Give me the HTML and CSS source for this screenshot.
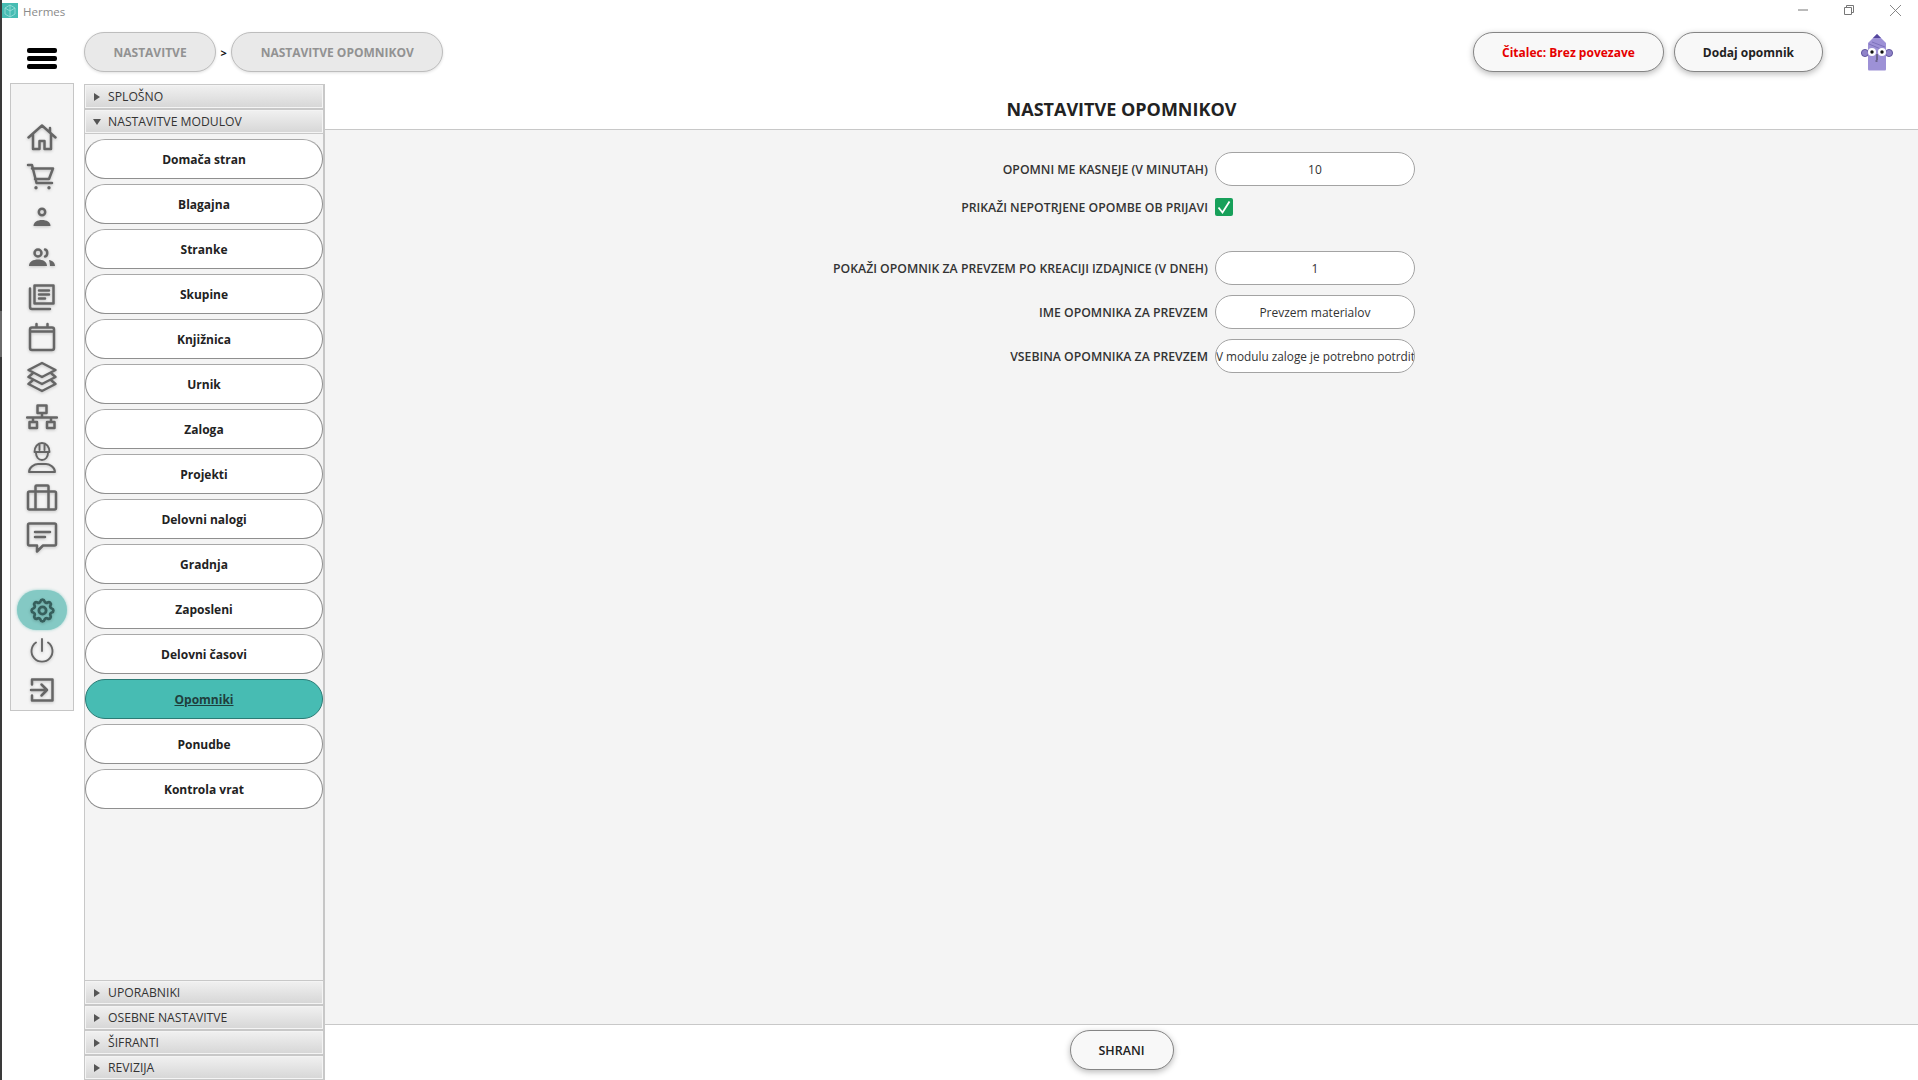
FILE: index.html
```html
<!DOCTYPE html>
<html lang="sl">
<head>
<meta charset="utf-8">
<title>Hermes</title>
<link rel="stylesheet" href="styles.css">
</head>
<body>
<div class="window">
  <div class="edge"></div>
  <div class="app">
    <header class="titlebar">
      <span class="app-icon"><svg viewBox="0 0 16 16" width="16" height="16"><path d="M8 2l5 3v6l-5 3-5-3V5zM8 2v12M3 5l5 3 5-3" fill="none" stroke="#9fe0da" stroke-width=".8"/></svg></span>
      <span class="app-name">Hermes</span>
      <div class="win-controls">
        <span class="win-btn"><svg viewBox="0 0 10 10" width="10" height="10"><path d="M0 5h10" stroke="#777" fill="none"/></svg></span>
        <span class="win-btn"><svg viewBox="0 0 10 10" width="10" height="10"><path d="M.5 2.5h7v7h-7zM2.5 2.5v-2h7v7h-2" stroke="#777" fill="none"/></svg></span>
        <span class="win-btn"><svg viewBox="0 0 10 10" width="11" height="11"><path d="M0 0l10 10M10 0L0 10" stroke="#777" fill="none" stroke-width=".8"/></svg></span>
      </div>
    </header>

    <div class="topbar">
      <div class="hamburger"><i></i><i></i><i></i></div>
      <nav class="crumbs">
        <span class="crumb">NASTAVITVE</span>
        <span class="crumb-sep">&gt;</span>
        <span class="crumb">NASTAVITVE OPOMNIKOV</span>
      </nav>
      <div class="top-actions">
        <button class="pill-btn pill-red">Čitalec: Brez povezave</button>
        <button class="pill-btn">Dodaj opomnik</button>
        <span class="avatar">
          <svg viewBox="0 0 32 39" width="32" height="39">
            <circle cx="4" cy="20" r="3.6" fill="#8f83c8" stroke="#4e4290" stroke-width=".8"/>
            <circle cx="28" cy="20" r="3.6" fill="#8f83c8" stroke="#4e4290" stroke-width=".8"/>
            <path d="M7 10 16 1l9 9v26q0 1.500-1 1.500H8q-1 0-1-1.500z" fill="#9d91d6"/>
            <path d="M12 5l4-4 4 4z" fill="#54479c"/>
            <path d="M8 11l14 6M11 9l13 5" stroke="#7468b4" stroke-width=".8" fill="none"/>
            <circle cx="11" cy="19" r="4" fill="#fff"/><circle cx="21" cy="19" r="4" fill="#fff"/>
            <circle cx="11" cy="19" r="1.700" fill="#111"/><circle cx="21" cy="19" r="1.700" fill="#111"/>
            <path d="M16 21v6M14.500 28h2" stroke="#222" stroke-width=".8" fill="none"/>
          </svg>
        </span>
      </div>
    </div>

    <div class="workspace">
      <aside class="rail">
        <span class="rail-item"><svg class="ico" viewBox="0 0 32 32"><path d="M2.500 16.500 16 4.500l13.500 12M7 13v15h6.500v-8h5v8H25V13M24 7v4"/></svg></span>
        <span class="rail-item"><svg class="ico" viewBox="0 0 32 32"><path d="M2 4h4l4.500 18H26M6 7.500h21l-4 10.500H9"/><circle class="solid" cx="10" cy="26.700" r="1.700"/><circle class="solid" cx="23" cy="26.700" r="1.700"/></svg></span>
        <span class="rail-item"><svg class="ico" viewBox="0 0 32 32"><circle cx="16" cy="11" r="3.200"/><path class="solid" d="M7.500 25c0-4 4-6 8.500-6s8.500 2 8.500 6z"/></svg></span>
        <span class="rail-item"><svg class="ico" viewBox="0 0 32 32"><circle cx="12" cy="12" r="3.500"/><path d="M19 8.500c3 .5 3 6.500 0 7"/><path class="solid" d="M3 25c0-4.500 4.500-6.500 9-6.500s9 2 9 6.500zM23 19c3.500.5 6 2.500 6 6h-5c0-2-.5-4-1-6z"/></svg></span>
        <span class="rail-item"><svg class="ico" viewBox="0 0 32 32"><path d="M8.500 4.500h19v18h-19zM4 7.500V26q0 2 2 2h18M13 9.500h10M13 13.500h10M13 17.500h6"/></svg></span>
        <span class="rail-item"><svg class="ico" viewBox="0 0 32 32"><path d="M6 6.500h20q2 0 2 2V27q0 2-2 2H6q-2 0-2-2V8.500q0-2 2-2zM4 10.500h24M10.500 3v3.500M21.500 3v3.500"/></svg></span>
        <span class="rail-item"><svg class="ico" viewBox="0 0 32 32"><path d="M16 2 29.500 9 16 16 2.500 9zM6.500 12.500 2.500 16 16 23l13.500-7-4-3.500M6.500 19.500 2.500 23 16 30l13.500-7-4-3.500"/></svg></span>
        <span class="rail-item"><svg class="ico" viewBox="0 0 32 32"><path d="M11.500 4.500h9v7.500h-9zM16 12v4M1 16.500h30M7 16.500V21M25 16.500V21M3.500 21h7.500v6H3.500zM21 21h7.500v6H21z"/></svg></span>
        <span class="rail-item"><svg class="ico ico-thin" viewBox="0 0 32 32"><path d="M8.500 11c0-5 3-9 7.500-9s7.500 4 7.500 9zM13.500 3v6M18.500 3v6M10 12c0 4 2.500 7 6 7s6-3 6-7M3 31c0-5 6-8 9-8h8c3 0 9 3 9 8z"/></svg></span>
        <span class="rail-item"><svg class="ico" viewBox="0 0 32 32"><path d="M3.500 10.500h25q1.500 0 1.500 1.500v15q0 1.500-1.500 1.500h-25Q2 28.500 2 27V12q0-1.500 1.500-1.500zM9.500 28.500V5.500q0-1 1-1h11q1 0 1 1v23"/></svg></span>
        <span class="rail-item"><svg class="ico" viewBox="0 0 32 32"><path d="M3.500 2.500h25q1.500 0 1.500 1.500v19q0 1.500-1.500 1.500H17l-6 6v-6H3.500Q2 24.500 2 23V4q0-1.500 1.500-1.500zM9 11h15M9 16h10"/></svg></span>
        <span class="rail-spacer"></span>
        <span class="rail-item rail-item-on"><svg class="ico ico-gear" viewBox="0 0 24 24"><path d="M10.325 4.317c.426-1.756 2.924-1.756 3.350 0a1.724 1.724 0 0 0 2.573 1.066c1.543-.94 3.310.826 2.370 2.370a1.724 1.724 0 0 0 1.065 2.572c1.756.426 1.756 2.924 0 3.350a1.724 1.724 0 0 0-1.066 2.573c.94 1.543-.826 3.310-2.370 2.370a1.724 1.724 0 0 0-2.572 1.065c-.426 1.756-2.924 1.756-3.350 0a1.724 1.724 0 0 0-2.573-1.066c-1.543.94-3.310-.826-2.370-2.370a1.724 1.724 0 0 0-1.065-2.572c-1.756-.426-1.756-2.924 0-3.350a1.724 1.724 0 0 0 1.066-2.573c-.94-1.543.826-3.310 2.370-2.370c1 .608 2.296.07 2.572-1.065z"/><circle cx="12" cy="12" r="3"/></svg></span>
        <span class="rail-item"><svg class="ico ico-thin" viewBox="0 0 32 32"><path d="M16 5v12M10 8.500a10.500 10.500 0 1 0 12 0"/></svg></span>
        <span class="rail-item"><svg class="ico" viewBox="0 0 32 32"><path d="M6 10.500V5.500h20.500v21H6v-5M5 16h16M15.500 10.500 21 16l-5.500 5.500"/></svg></span>
      </aside>

      <section class="accordion">
        <div class="acc-head"><span class="tri"></span>SPLOŠNO</div>
        <div class="acc-head"><span class="tri tri-open"></span>NASTAVITVE MODULOV</div>
        <div class="acc-panel">
          <button class="mod-btn">Domača stran</button>
          <button class="mod-btn">Blagajna</button>
          <button class="mod-btn">Stranke</button>
          <button class="mod-btn">Skupine</button>
          <button class="mod-btn">Knjižnica</button>
          <button class="mod-btn">Urnik</button>
          <button class="mod-btn">Zaloga</button>
          <button class="mod-btn">Projekti</button>
          <button class="mod-btn">Delovni nalogi</button>
          <button class="mod-btn">Gradnja</button>
          <button class="mod-btn">Zaposleni</button>
          <button class="mod-btn">Delovni časovi</button>
          <button class="mod-btn mod-btn-on">Opomniki</button>
          <button class="mod-btn">Ponudbe</button>
          <button class="mod-btn">Kontrola vrat</button>
        </div>
        <div class="acc-head"><span class="tri"></span>UPORABNIKI</div>
        <div class="acc-head"><span class="tri"></span>OSEBNE NASTAVITVE</div>
        <div class="acc-head"><span class="tri"></span>ŠIFRANTI</div>
        <div class="acc-head"><span class="tri"></span>REVIZIJA</div>
      </section>

      <main class="main">
        <h1 class="main-title">NASTAVITVE OPOMNIKOV</h1>
        <div class="main-body">
          <form class="form">
            <label class="form-label">OPOMNI ME KASNEJE (V MINUTAH)</label>
            <input class="field" value="10">
            <label class="form-label">PRIKAŽI NEPOTRJENE OPOMBE OB PRIJAVI</label>
            <span class="check-wrap"><span class="check"><svg viewBox="0 0 18 18" width="18" height="18"><path d="M3.500 9.500 7.500 14.500 14.500 3.500" fill="none" stroke="#fff" stroke-width="1.800"/></svg></span></span>
            <span class="form-spacer"></span>
            <label class="form-label">POKAŽI OPOMNIK ZA PREVZEM PO KREACIJI IZDAJNICE (V DNEH)</label>
            <input class="field" value="1">
            <label class="form-label">IME OPOMNIKA ZA PREVZEM</label>
            <input class="field" value="Prevzem materialov">
            <label class="form-label">VSEBINA OPOMNIKA ZA PREVZEM</label>
            <input class="field field-left" value="V modulu zaloge je potrebno potrditi prevzem materialov">
          </form>
        </div>
        <footer class="main-foot">
          <button class="pill-btn pill-save">SHRANI</button>
        </footer>
      </main>
    </div>
  </div>
</div>
</body>
</html>
```

FILE: styles.css
```css
* { box-sizing: border-box; }
html, body { margin: 0; height: 100%; background: #fff; overflow: hidden; }
body { font-family: "Open Sans", "Liberation Sans", sans-serif; color: #222; }
button, input { font-family: inherit; }

.window { display: flex; width: 1918px; height: 1080px; }
.edge {
  width: 2px;
  flex: none;
  background: linear-gradient(#3a3a3a 0 311px, #6a6a6a 311px 357px, #3a3a3a 357px);
}
.app { flex: 1; min-width: 0; display: flex; flex-direction: column; }

.titlebar { height: 25px; flex: none; display: flex; align-items: flex-start; padding-top: 3px; }
.app-icon { width: 16px; height: 15px; background: #47bcb3; display: flex; align-items: center; justify-content: center; }
.app-name { margin-left: 5px; font-size: 11.500px; line-height: 17px; color: #8a8a8a; }
.win-controls { margin-left: auto; display: flex; margin-top: 2px; }
.win-btn { width: 46px; height: 10px; display: flex; align-items: center; justify-content: center; }

.topbar { height: 58px; flex: none; display: flex; align-items: flex-start; padding: 7px 25px 0 25px; }
.hamburger { width: 30px; margin-top: 16px; margin-right: 27px; display: flex; flex-direction: column; gap: 3.500px; }
.hamburger i { display: block; height: 4.500px; border-radius: 2px; background: #000; }
.crumbs { display: flex; align-items: center; }
.crumb {
  height: 40px;
  line-height: 39px;
  padding: 0 28.500px;
  border: 1px solid #bdbdbd;
  border-radius: 20px;
  background: #e9e9e9;
  color: #929292;
  font-size: 12px;
  font-weight: 700;
  box-shadow: 0 1px 3px rgba(0,0,0,.12);
}
.crumb-sep { width: 15px; text-align: center; font-size: 11px; font-weight: 700; color: #111; }

.top-actions { margin-left: auto; display: flex; align-items: flex-start; gap: 10px; }
.pill-btn {
  height: 40px;
  padding: 0 28px;
  border: 1.500px solid #858585;
  border-radius: 20px;
  background: #f8f8f8;
  color: #222;
  font-size: 12px;
  font-weight: 700;
  box-shadow: 0 2px 6px rgba(0,0,0,.28);
}
.pill-red { color: #e60000; }
.avatar { margin-left: 28px; margin-top: 1px; display: block; height: 39px; }

.workspace { flex: 1; min-height: 0; display: flex; align-items: flex-start; }

.rail {
  width: 64px;
  height: 628px;
  flex: none;
  margin-left: 8px;
  padding-top: 33px;
  border: 1px solid #c6c6c6;
  background: #f4f4f4;
  display: flex;
  flex-direction: column;
  align-items: center;
}
.rail-item { width: 50px; height: 40px; flex: none; display: flex; align-items: center; justify-content: center; }
.rail-item-on { background: #84c9c4; border-radius: 20px; box-shadow: 0 0 3px rgba(132,201,196,.9); }
.rail-spacer { height: 33px; flex: none; }
.ico {
  width: 32px;
  height: 32px;
  fill: none;
  stroke: #666;
  stroke-width: 2.500;
  stroke-linejoin: round;
  stroke-linecap: round;
  filter: drop-shadow(0 1px 1.500px rgba(0,0,0,.2));
}
.ico-thin { stroke-width: 1.900; }
.ico .solid { fill: #666; stroke: none; }
.ico-gear { width: 29px; height: 29px; stroke: #365f5c; stroke-width: 2.300; }

.accordion {
  width: 241px;
  height: 996px;
  flex: none;
  margin-left: 10px;
  margin-top: 1px;
  display: flex;
  flex-direction: column;
  background: #f4f4f4;
}
.acc-head {
  height: 25px;
  flex: none;
  display: flex;
  align-items: center;
  padding-left: 9px;
  border: 1px solid #c8c8c8;
  border-right-width: 2px;
  box-shadow: inset 0 0 0 1px #f4f4f4;
  background: linear-gradient(#f1f1f1, #d6d6d6);
  font-size: 12.200px;
  color: #333;
}
.tri {
  width: 0;
  height: 0;
  margin-right: 8px;
  margin-left: 0;
  border-left: 6px solid #555;
  border-top: 4px solid transparent;
  border-bottom: 4px solid transparent;
}
.tri-open {
  margin-left: -1px;
  margin-right: 7px;
  border-left: 4.500px solid transparent;
  border-right: 4.500px solid transparent;
  border-top: 6px solid #555;
  border-bottom: 0;
}
.acc-panel {
  flex: 1;
  min-height: 0;
  padding-top: 5px;
  display: flex;
  flex-direction: column;
  gap: 5px;
  border-left: 1px solid #c8c8c8;
  border-right: 2px solid #c6c6c6;
}
.mod-btn {
  height: 40px;
  flex: none;
  border: 1.500px solid #8f8f8f;
  border-top-color: #a8a8a8;
  border-radius: 20px;
  background: #fff;
  color: #222;
  font-size: 12px;
  font-weight: 700;
}
.mod-btn-on { background: #47bcb3; border-color: #2b7b75; color: #1f3f3d; text-decoration: underline; }

.main { flex: 1; min-width: 0; height: 997px; display: flex; flex-direction: column; }
.main-title {
  height: 47px;
  flex: none;
  margin: 0;
  padding-top: 6px;
  display: flex;
  align-items: center;
  justify-content: center;
  border-bottom: 1px solid #c8c8c8;
  font-size: 18px;
  font-weight: 700;
  color: #222;
}
.main-body { flex: 1; min-height: 0; background: #f4f4f4; padding-top: 22px; }
.form {
  display: grid;
  grid-template-columns: auto 200px;
  grid-template-rows: 34px 22px 13px 34px 34px 34px;
  gap: 10px 7px;
  justify-content: center;
  padding-left: 5px;
}
.form-label { align-self: center; text-align: right; font-size: 12.250px; font-weight: 600; color: #333; white-space: nowrap; }
.form-spacer { grid-column: 1 / -1; }
.field {
  width: 200px;
  height: 34px;
  padding: 0 1px;
  border: 1.500px solid #a3a3a3;
  border-radius: 17px;
  background: #fff;
  color: #333;
  font-size: 12px;
  text-align: center;
  outline: 0;
}
.field-left { text-align: left; padding: 0; font-size: 11.800px; }
.check-wrap { display: flex; align-items: center; }
.check { width: 18px; height: 18px; border-radius: 2px; background: #17a05a; display: block; }
.check svg { display: block; }

.main-foot {
  height: 56px;
  flex: none;
  padding-top: 5px;
  display: flex;
  justify-content: center;
  align-items: flex-start;
  border-top: 1px solid #c8c8c8;
  background: #fff;
}
.pill-save { width: 104px; padding: 0; font-size: 12.500px; font-weight: 600; }
```
